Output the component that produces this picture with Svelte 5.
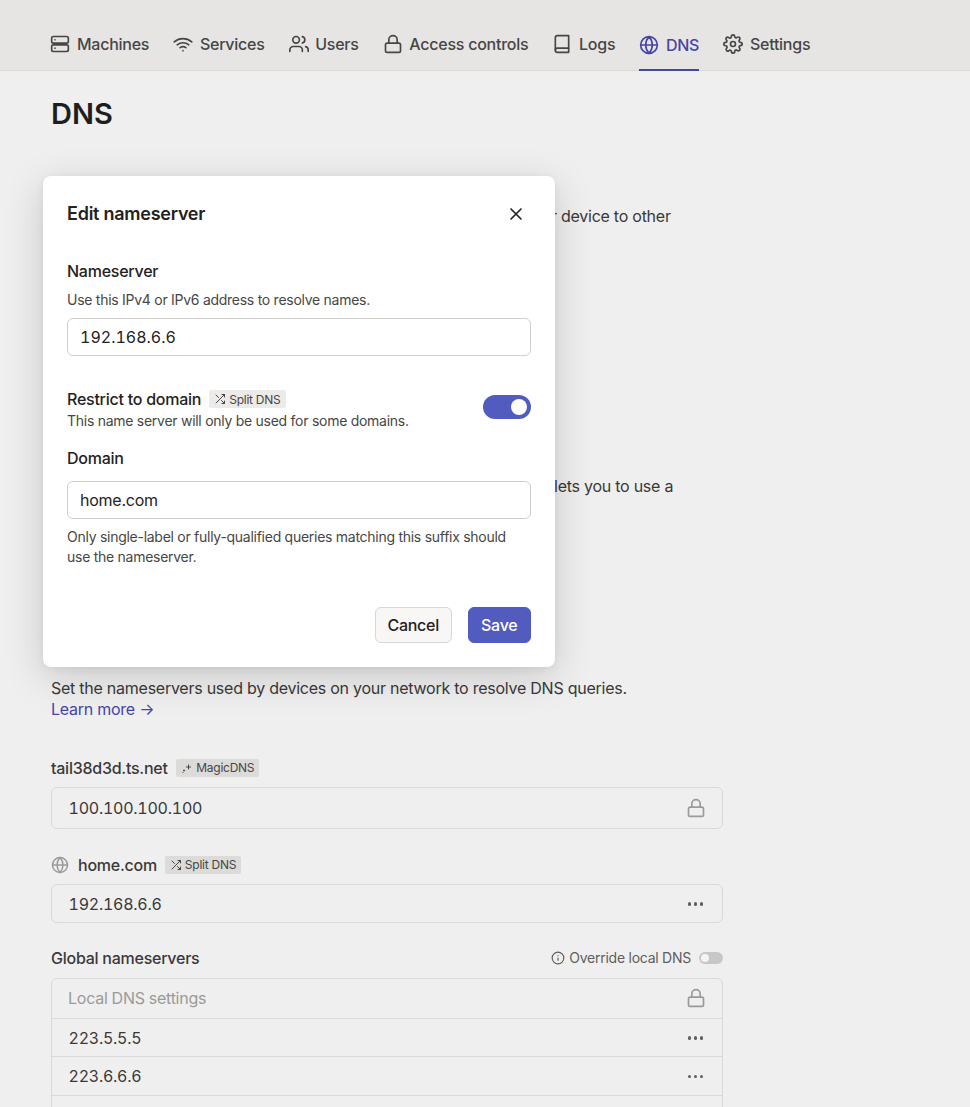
<script lang="ts">
  const tabs = [
    { label: "Machines", icon: "server" },
    { label: "Services", icon: "wifi" },
    { label: "Users", icon: "users" },
    { label: "Access controls", icon: "lock" },
    { label: "Logs", icon: "book" },
    { label: "DNS", icon: "globe", active: true },
    { label: "Settings", icon: "gear" },
  ];
  const globalRows = ["223.5.5.5", "223.6.6.6", "8.8.8.8"];
</script>

{#snippet icon(name: string, size = 20)}
  <svg width={size} height={size} viewBox="0 0 24 24" fill="none" stroke="currentColor" stroke-width="2" stroke-linecap="round" stroke-linejoin="round">
    {#if name === "server"}
      <rect x="2" y="3" width="20" height="8" rx="2" />
      <rect x="2" y="13" width="20" height="8" rx="2" />
      <path d="M6 7h.01M6 17h.01" />
    {:else if name === "wifi"}
      <path d="M1.5 9.5a16 16 0 0 1 21 0M5 13a11 11 0 0 1 14 0M8.5 16.4a6 6 0 0 1 7 0M12 20h.01" />
    {:else if name === "users"}
      <path d="M16 21v-2a4 4 0 0 0-4-4H5a4 4 0 0 0-4 4v2" />
      <circle cx="8.5" cy="7" r="4" />
      <path d="M23 21v-2a4 4 0 0 0-3-3.87M16 3.13a4 4 0 0 1 0 7.75" />
    {:else if name === "lock"}
      <rect x="3" y="11" width="18" height="11" rx="2" />
      <path d="M7 11V7a5 5 0 0 1 10 0v4" />
    {:else if name === "book"}
      <path d="M4 19.5A2.5 2.5 0 0 1 6.5 17H20" />
      <path d="M6.5 2H20v20H6.5A2.5 2.5 0 0 1 4 19.5v-15A2.5 2.5 0 0 1 6.5 2z" />
    {:else if name === "globe"}
      <circle cx="12" cy="12" r="10" />
      <path d="M2 12h20M12 2a15 15 0 0 1 4 10 15 15 0 0 1-4 10 15 15 0 0 1-4-10 15 15 0 0 1 4-10z" />
    {:else if name === "gear"}
      <circle cx="12" cy="12" r="3" />
      <path d="M19.4 15a1.65 1.65 0 0 0 .33 1.82l.06.06a2 2 0 1 1-2.83 2.83l-.06-.06a1.65 1.65 0 0 0-2.82 1.17V21a2 2 0 1 1-4 0v-.09a1.65 1.65 0 0 0-2.82-1.12l-.06.06a2 2 0 1 1-2.83-2.83l.06-.06a1.65 1.65 0 0 0-1.17-2.82H3a2 2 0 1 1 0-4h.09a1.65 1.65 0 0 0 1.12-2.82l-.06-.06a2 2 0 1 1 2.83-2.83l.06.06a1.65 1.65 0 0 0 1.82.33H9a1.65 1.65 0 0 0 1-1.51V3a2 2 0 1 1 4 0v.09a1.65 1.65 0 0 0 2.82 1.12l.06-.06a2 2 0 1 1 2.83 2.83l-.06.06a1.65 1.65 0 0 0-.33 1.82V9a1.65 1.65 0 0 0 1.51 1H21a2 2 0 1 1 0 4h-.09a1.65 1.65 0 0 0-1.51 1z" />
    {:else if name === "x"}
      <path d="M18 6 6 18M6 6l12 12" />
    {:else if name === "shuffle"}
      <path d="M16 3h5v5M4 20 21 3M21 16v5h-5M15 15l6 6M4 4l5 5" />
    {:else if name === "sparkle"}
      <path d="M15 6v8M11 10h8M6 16v2M5 17h2M4 21h.01" />
    {:else if name === "info"}
      <circle cx="12" cy="12" r="10" />
      <path d="M12 16v-4M12 8h.01" />
    {/if}
  </svg>
{/snippet}

{#snippet dots()}
  <span class="dots"><i></i><i></i><i></i></span>
{/snippet}

<div class="page">
  <nav class="tabs">
    {#each tabs as tab}
      <div class="tab" class:active={tab.active}>
        {@render icon(tab.icon)}
        <span>{tab.label}</span>
      </div>
    {/each}
  </nav>

  <main class="content">
    <h1>DNS</h1>

    <section class="tailnet">
      <h2>Tailnet name</h2>
      <p class="text">This unique name is used when registering DNS entries, sharing your device to other tailnets, and issuing TLS certificates.</p>
    </section>

    <section class="magic">
      <h2>MagicDNS</h2>
      <p class="text">Automatically register domain names for devices in your tailnet. This lets you to use a device's machine name instead of its IP address.</p>
    </section>

    <section class="servers">
      <h2>Nameservers</h2>
      <p class="text">Set the nameservers used by devices on your network to resolve DNS queries.</p>
      <a class="learn" href="#top">Learn more →</a>

      <div class="group-label first">
        <span>tail38d3d.ts.net</span>
        <span class="badge">{@render icon("sparkle", 12)}MagicDNS</span>
      </div>
      <div class="box tall">
        <div class="row">
          <span>100.100.100.100</span>
          <span class="lock">{@render icon("lock", 20)}</span>
        </div>
      </div>

      <div class="group-label second">
        <span class="globe">{@render icon("globe", 18)}</span>
        <span>home.com</span>
        <span class="badge">{@render icon("shuffle", 12)}Split DNS</span>
      </div>
      <div class="box">
        <div class="row">
          <span>192.168.6.6</span>
          {@render dots()}
        </div>
      </div>

      <div class="global-head">
        <span>Global nameservers</span>
        <span class="override">
          <span class="info">{@render icon("info", 14)}</span>
          Override local DNS
          <span class="mini-toggle"></span>
        </span>
      </div>
      <div class="box list">
        <div class="row local">
          <span>Local DNS settings</span>
          <span class="lock">{@render icon("lock", 20)}</span>
        </div>
        {#each globalRows as ip}
          <div class="row">
            <span>{ip}</span>
            {@render dots()}
          </div>
        {/each}
      </div>
    </section>
  </main>

  <div class="modal">
    <header class="modal-head">
      <h3>Edit nameserver</h3>
      <span class="close">{@render icon("x", 20)}</span>
    </header>

    <div class="label">Nameserver</div>
    <p class="hint">Use this IPv4 or IPv6 address to resolve names.</p>
    <div class="input ip">192.168.6.6</div>

    <div class="restrict">
      <div>
        <div class="restrict-title">
          <span>Restrict to domain</span>
          <span class="badge light">{@render icon("shuffle", 12)}Split DNS</span>
        </div>
        <p class="hint">This name server will only be used for some domains.</p>
      </div>
      <span class="toggle"></span>
    </div>

    <div class="label domain">Domain</div>
    <div class="input">home.com</div>
    <p class="hint help">Only single-label or fully-qualified queries matching this suffix should use the nameserver.</p>

    <div class="actions">
      <button class="btn">Cancel</button>
      <button class="btn primary">Save</button>
    </div>
  </div>
</div>

<style>
  :global(body) {
    margin: 0;
    background: #efefef;
  }
  .page {
    position: relative;
    height: 1107px;
    overflow: hidden;
    background: #efefef;
    color: #232222;
    font-family: Inter, "Liberation Sans", sans-serif;
    font-size: 16px;
    letter-spacing: -0.25px;
  }
  .tabs {
    display: flex;
    gap: 24px;
    height: 70px;
    padding: 0 51px 0 50.3px;
    background: #e6e5e3;
    border-bottom: 1px solid #dad9d7;
  }
  .tab {
    display: flex;
    align-items: center;
    gap: 6.7px;
    height: 70px;
    padding-top: 20px;
    box-sizing: border-box;
    margin-bottom: -1px;
    font-weight: 450;
    color: #474645;
    border-bottom: 2px solid transparent;
  }
  .tab.active {
    color: #4545a8;
    font-weight: 500;
    border-bottom-color: #4545a8;
    height: 71px;
  }
  .content {
    padding: 24px 51px 0;
    width: 672px;
  }
  h1 {
    margin: 0;
    font-size: 29px;
    line-height: 38px;
    font-weight: 600;
    letter-spacing: 0;
    color: #1f1e1e;
  }
  h2 {
    margin: 0;
    font-size: 20px;
    line-height: 28px;
    font-weight: 600;
  }
  .text {
    margin: 0;
    line-height: 24px;
    color: #3a3938;
  }
  .tailnet {
    margin-top: 39px;
  }
  .tailnet .text {
    margin-top: 4px;
  }
  .magic {
    margin-top: 190px;
  }
  .magic .text {
    margin-top: 4px;
  }
  .servers {
    margin-top: 122px;
  }
  .servers .text {
    margin-top: 4px;
  }
  .learn {
    display: block;
    margin-top: -1px;
    line-height: 20px;
    color: #4545a8;
    text-decoration: none;
  }
  .group-label {
    display: flex;
    align-items: center;
    gap: 8.5px;
    line-height: 20px;
    color: #3a3938;
    font-weight: 450;
  }
  .group-label.first {
    margin-top: 39px;
  }
  .group-label.second {
    margin-top: 26px;
    gap: 8px;
  }
  .globe {
    display: flex;
    color: #9b9a98;
    margin-right: 1px;
  }
  .badge {
    display: inline-flex;
    align-items: center;
    gap: 3px;
    height: 18px;
    padding: 0 5px;
    border-radius: 2px;
    background: #dcdbd9;
    color: #474645;
    font-size: 12px;
    font-weight: 400;
  }
  .badge.light {
    background: #edebe9;
  }
  .box {
    margin-top: 9px;
    border: 1px solid #dad9d7;
    border-radius: 6px;
  }
  .row {
    display: flex;
    align-items: center;
    justify-content: space-between;
    height: 37px;
    padding: 0 17px 0 16.5px;
    font-variant-numeric: tabular-nums;
    color: #3a3938;
    border-top: 1px solid #dad9d7;
  }
  .row:first-child {
    border-top: none;
  }
  .tall .row {
    height: 40px;
  }
  .list .row {
    height: 37.4px;
  }
  .list .local {
    height: 38px;
    padding-left: 16px;
    padding-bottom: 1px;
    color: #9b9a98;
  }
  .lock {
    display: flex;
    margin-right: -1px;
    color: #9b9a98;
  }
  .dots {
    display: flex;
    gap: 2.5px;
    margin-right: 2px;
    margin-top: 1px;
  }
  .dots i {
    width: 3.5px;
    height: 3.5px;
    border-radius: 50%;
    background: #5f5e5c;
  }
  .global-head {
    display: flex;
    align-items: center;
    justify-content: space-between;
    margin-top: 25px;
    line-height: 20px;
    font-weight: 450;
    color: #3a3938;
  }
  .override {
    display: flex;
    align-items: center;
    gap: 4px;
    font-size: 14px;
    font-weight: 400;
    color: #5f5e5c;
  }
  .info {
    display: flex;
  }
  .mini-toggle {
    position: relative;
    width: 24px;
    height: 12px;
    margin-left: 4px;
    border-radius: 6px;
    background: #c9c7c6;
  }
  .mini-toggle::after {
    content: "";
    position: absolute;
    left: 2px;
    top: 2px;
    width: 8px;
    height: 8px;
    border-radius: 50%;
    background: #f4f4f4;
  }
  .global-head + .box {
    margin-top: 10px;
  }
  .modal {
    position: absolute;
    left: 43px;
    top: 176px;
    width: 512px;
    height: 491px;
    box-sizing: border-box;
    padding: 23px 24px 24px;
    background: #fff;
    border-radius: 8px;
    box-shadow: 0 10px 40px rgba(0, 0, 0, 0.16), 0 2px 8px rgba(0, 0, 0, 0.06);
  }
  .modal-head {
    display: flex;
    align-items: center;
    justify-content: space-between;
    height: 28px;
  }
  h3 {
    margin: 0;
    font-size: 18px;
    font-weight: 600;
    color: #232222;
  }
  .close {
    display: flex;
    margin-right: 5px;
    margin-top: 2px;
    color: #232222;
  }
  .label {
    margin-top: 34px;
    line-height: 20px;
    font-weight: 450;
    color: #232222;
  }
  .label.domain {
    margin-top: 17px;
  }
  .hint {
    margin: 0;
    font-size: 14px;
    line-height: 20px;
    letter-spacing: -0.27px;
    color: #474645;
  }
  .label + .hint {
    margin-top: 9px;
  }
  .input {
    display: flex;
    align-items: center;
    height: 38px;
    box-sizing: border-box;
    margin-top: 8px;
    padding: 0 12px;
    border: 1px solid #cfcecc;
    border-radius: 6px;
    color: #232222;
  }
  .input.ip {
    font-variant-numeric: tabular-nums;
    letter-spacing: 0;
  }
  .label.domain + .input {
    margin-top: 13px;
  }
  .restrict {
    display: flex;
    align-items: flex-start;
    justify-content: space-between;
    margin-top: 31px;
  }
  .restrict-title {
    display: flex;
    align-items: center;
    gap: 8px;
    height: 24px;
    font-weight: 450;
  }
  .restrict .hint {
    line-height: 20px;
  }
  .toggle {
    position: relative;
    width: 48px;
    height: 24px;
    margin-top: 8px;
    border-radius: 12px;
    background: #525cbf;
  }
  .toggle::after {
    content: "";
    position: absolute;
    right: 4px;
    top: 4px;
    width: 16px;
    height: 16px;
    border-radius: 50%;
    background: #fff;
  }
  .help {
    margin-top: 8px;
    max-width: 450px;
  }
  .actions {
    position: absolute;
    right: 24px;
    bottom: 24px;
    display: flex;
    gap: 16px;
  }
  .btn {
    height: 36px;
    padding: 0 11.5px;
    box-sizing: border-box;
    border: 1px solid #d8d7d5;
    border-radius: 6px;
    background: #f8f7f6;
    color: #232222;
    font: 450 16px Inter, "Liberation Sans", sans-serif;
    letter-spacing: -0.25px;
  }
  .btn.primary {
    padding: 0 12.5px;
    border-color: #525cbf;
    background: #525cbf;
    color: #fff;
  }
</style>
